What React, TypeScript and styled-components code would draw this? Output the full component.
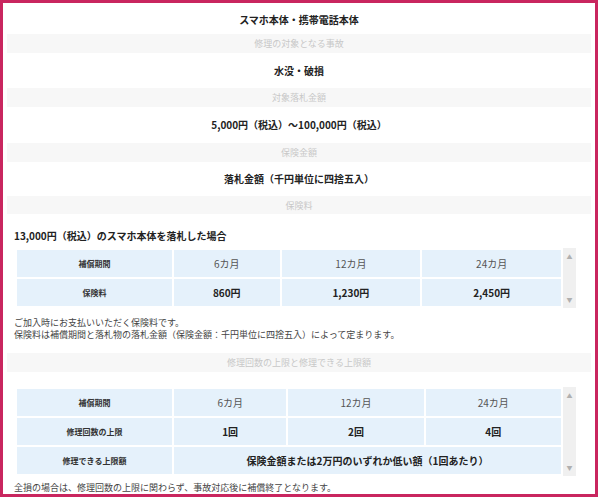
import styled, { createGlobalStyle } from "styled-components";

const Global = createGlobalStyle`
  html, body { margin: 0; padding: 0; background: #fff; }
  body { font-family: "Noto Sans CJK JP", "Liberation Sans", sans-serif; color: #333; }
`;

const Frame = styled.div`
  box-sizing: border-box;
  width: 598px;
  height: 497px;
  border: 3px solid #c9265f;
  padding: 1px 4px 0 4px;
  display: flex;
  flex-direction: column;
  overflow: hidden;
`;

const ValueRow = styled.div<{ $h: number }>`
  height: ${(p) => p.$h}px;
  display: flex;
  align-items: center;
  justify-content: center;
  font-size: 10px;
  font-weight: bold;
  color: #222;
`;

const LabelRow = styled.div<{ $gap?: number }>`
  height: 19px;
  display: flex;
  align-items: center;
  justify-content: center;
  background: #f7f7f7;
  color: #c8c8c8;
  font-size: 9px;
  margin-bottom: ${(p) => p.$gap ?? 0}px;
`;

const Lead = styled.div`
  font-size: 10px;
  font-weight: bold;
  color: #222;
  padding: 14px 0 5px 7px;
`;

const TableWrap = styled.div`
  display: flex;
  margin: 0 15px 0 8px;
`;

const Table = styled.table`
  flex: 1;
  border-collapse: collapse;
  font-size: 10px;
  td {
    background: #e5f1fb;
    border: 2px solid #fff;
    text-align: center;
    padding: 0;
  }
`;

const Head = styled.td`
  width: 155px;
  font-size: 8px;
  font-weight: bold;
`;

const Cell = styled.td<{ $bold?: boolean }>`
  font-weight: ${(p) => (p.$bold ? "bold" : "normal")};
  color: ${(p) => (p.$bold ? "#222" : "#555")};
`;

const Scroll = styled.div`
  width: 13px;
  background: #f0f0f0;
  display: flex;
  flex-direction: column;
  justify-content: space-between;
  align-items: center;
  color: #b0b0b0;
  font-size: 6px;
  padding: 4px 0;
  box-sizing: border-box;
`;

const Note = styled.div<{ $pad: string }>`
  font-size: 9px;
  color: #444;
  line-height: 12px;
  padding: ${(p) => p.$pad};
`;

export default function App() {
  return (
    <>
      <Global />
      <Frame>
        <ValueRow $h={31}>スマホ本体・携帯電話本体</ValueRow>
        <LabelRow>修理の対象となる事故</LabelRow>
        <ValueRow $h={36}>水没・破損</ValueRow>
        <LabelRow>対象落札金額</LabelRow>
        <ValueRow $h={37}>5,000円（税込）～100,000円（税込）</ValueRow>
        <LabelRow>保険金額</LabelRow>
        <ValueRow $h={35}>落札金額（千円単位に四捨五入）</ValueRow>
        <LabelRow>保険料</LabelRow>
        <Lead>13,000円（税込）のスマホ本体を落札した場合</Lead>
        <TableWrap>
          <Table>
            <tbody>
              <tr style={{ height: 29 }}>
                <Head>補償期間</Head>
                <Cell>6カ月</Cell>
                <Cell>12カ月</Cell>
                <Cell>24カ月</Cell>
              </tr>
              <tr style={{ height: 29 }}>
                <Head>保険料</Head>
                <Cell $bold>860円</Cell>
                <Cell $bold>1,230円</Cell>
                <Cell $bold>2,450円</Cell>
              </tr>
            </tbody>
          </Table>
          <Scroll>
            <span>▲</span>
            <span>▼</span>
          </Scroll>
        </TableWrap>
        <Note $pad="9px 0 12px 7px">
          ご加入時にお支払いいただく保険料です。
          <br />
          保険料は補償期間と落札物の落札金額（保険金額：千円単位に四捨五入）によって定まります。
        </Note>
        <LabelRow $gap={15}>修理回数の上限と修理できる上限額</LabelRow>
        <TableWrap>
          <Table>
            <tbody>
              <tr style={{ height: 29 }}>
                <Head>補償期間</Head>
                <Cell>6カ月</Cell>
                <Cell>12カ月</Cell>
                <Cell>24カ月</Cell>
              </tr>
              <tr style={{ height: 29 }}>
                <Head>修理回数の上限</Head>
                <Cell $bold>1回</Cell>
                <Cell $bold>2回</Cell>
                <Cell $bold>4回</Cell>
              </tr>
              <tr style={{ height: 29 }}>
                <Head>修理できる上限額</Head>
                <Cell $bold colSpan={3}>
                  保険金額または2万円のいずれか低い額（1回あたり）
                </Cell>
              </tr>
            </tbody>
          </Table>
          <Scroll>
            <span>▲</span>
            <span>▼</span>
          </Scroll>
        </TableWrap>
        <Note $pad="6px 0 0 7px">全損の場合は、修理回数の上限に関わらず、事故対応後に補償終了となります。</Note>
      </Frame>
    </>
  );
}
